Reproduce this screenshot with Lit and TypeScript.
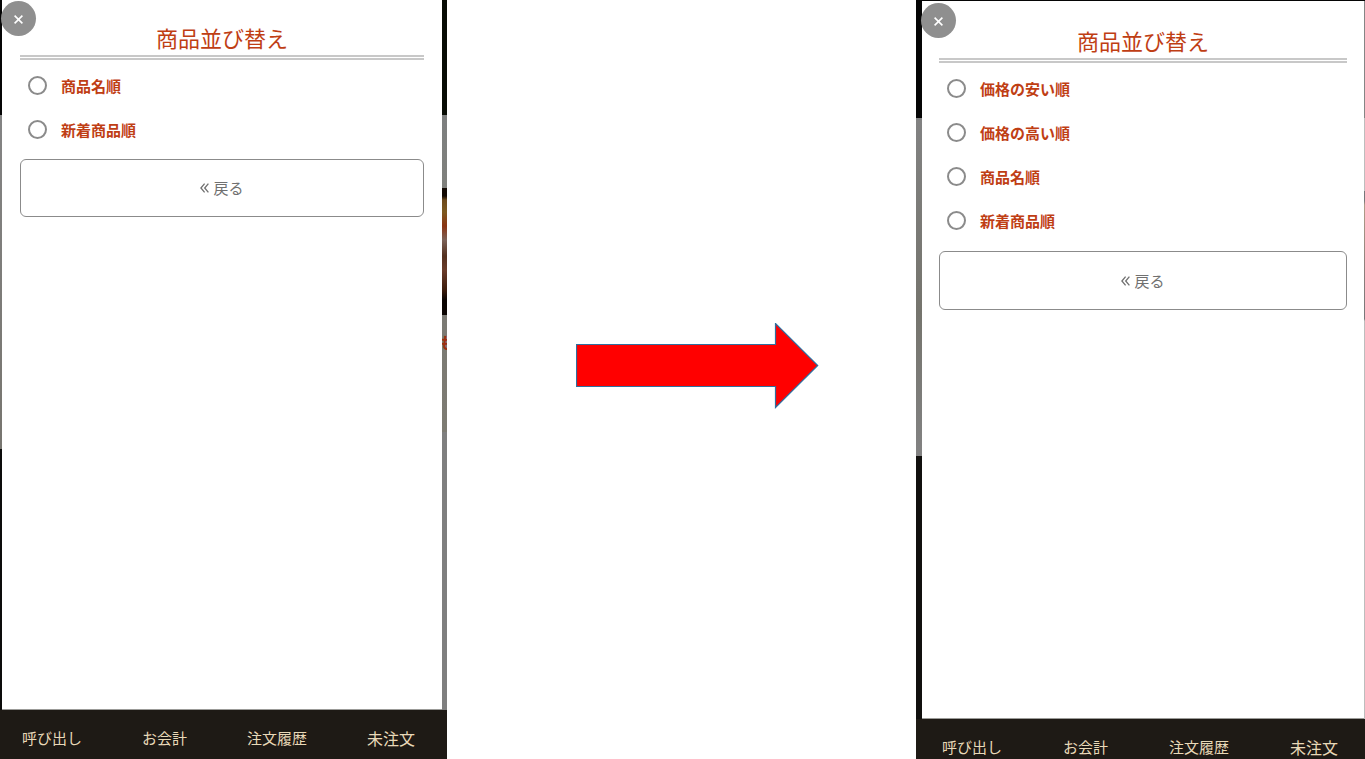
import { LitElement, html, css, svg } from "lit";
import { customElement, property } from "lit/decorators.js";
import { classMap } from "lit/directives/class-map.js";

const FOOTER_ITEMS = ["呼び出し", "お会計", "注文履歴"];
const FOOTER_TOTAL = "未注文";

@customElement("sort-phone")
class SortPhone extends LitElement {
  @property({ type: Array }) options: string[] = [];
  @property({ type: String, reflect: true }) variant = "before";

  static styles = css`
    :host {
      display: flex;
      flex-direction: column;
      min-width: 0;
      min-height: 100vh;
      background: #1e1a15;
      --left: 2px;
      --right: 5px;
      --top: 0px;
      --title-pad: 22px;
      --side-pad: 18px;
      --button-gap: 7px;
      --button-height: 58px;
      --footer-height: 49px;
      --footer-pad: 17px 32px 0 22px;
    }
    :host([variant="after"]) {
      --left: 6px;
      --right: 1px;
      --top: 1px;
      --title-pad: 24px;
      --side-pad: 17px;
      --button-gap: 8px;
      --button-height: 59px;
      --footer-height: 40px;
      --footer-pad: 17px 27px 0 26px;
    }
    .stage {
      flex: 1;
      display: grid;
      grid-template-columns: var(--left) minmax(0, 1fr) var(--right);
      padding-top: var(--top);
      background: #050505;
    }
    .strip {
      overflow: hidden;
      background: linear-gradient(#050505 115px, #848484 115px, #77756f 449px, #0c0c0b 449px);
    }
    .strip.right {
      padding-top: 331px;
      background: linear-gradient(
        #080c05 115px, #7d7f7f 115px, #7f807c 188px,
        #120903 188px, #120903 196px, #6d4a1c 200px, #7d5a20 212px,
        #8a3412 226px, #7c6258 240px, #54301f 256px, #6a3c2a 270px,
        #3c1c0c 290px, #0b0502 300px, #0b0502 315px,
        #7b7a74 315px, #7d7b72 432px, #7f7f7f 432px
      );
    }
    :host([variant="after"]) .strip.left {
      background: linear-gradient(#050505 117px, #828282 117px, #75746d 310px, #828282 455px, #11100e 455px);
    }
    :host([variant="after"]) .strip.right {
      background: linear-gradient(
        #858585 117px, #bdbdbd 117px, #bdbdbd 190px, #77777a 190px, #77777a 200px,
        #b09c88 204px, #8d7f7c 270px, #77777a 318px, #bdbdbd 320px
      );
    }
    .peek {
      display: block;
      color: #9c2f10;
      font-size: 16px;
      line-height: 22px;
      font-weight: 700;
      text-indent: -3px;
    }
    .sheet {
      position: relative;
      box-sizing: border-box;
      padding: var(--title-pad) var(--side-pad) 0;
      background: #fff;
      border-bottom: 1px solid #9b9b98;
    }
    .close {
      position: absolute;
      top: 1px;
      left: -1px;
      width: 35px;
      height: 35px;
      padding: 0;
      border: 0;
      border-radius: 50%;
      background: #8f8f8f;
      display: grid;
      place-items: center;
    }
    :host([variant="after"]) .close {
      top: 2px;
    }
    h1 {
      margin: 0 0 4px;
      padding-bottom: 3px;
      border-bottom: 5px double #c8c8c8;
      color: #bf3e14;
      font-size: 22px;
      font-weight: 400;
      line-height: 30px;
      text-align: center;
    }
    fieldset {
      margin: 0;
      padding: 0;
      border: 0;
      min-width: 0;
    }
    .row {
      display: flex;
      align-items: center;
      gap: 14px;
      height: 44px;
      padding-left: 8px;
      color: #bf3e14;
      font-size: 15px;
      font-weight: 700;
      line-height: 22px;
    }
    .row input {
      appearance: none;
      box-sizing: border-box;
      width: 19px;
      height: 19px;
      margin: 0 0 2px;
      border: 2px solid #8b8b8b;
      border-radius: 50%;
      background: #fff;
    }
    .row input:checked {
      background: radial-gradient(#bf3e14 5px, #fff 6px);
    }
    .back {
      display: flex;
      align-items: center;
      justify-content: center;
      gap: 4px;
      box-sizing: border-box;
      width: 100%;
      height: var(--button-height);
      margin-top: var(--button-gap);
      padding: 0;
      border: 1px solid #8b8b8b;
      border-radius: 6px;
      background: #fff;
      color: #707070;
      font: inherit;
      font-size: 15px;
      line-height: 22px;
    }
    nav {
      box-sizing: border-box;
      height: var(--footer-height);
      padding: var(--footer-pad);
      display: flex;
      align-items: flex-start;
      justify-content: space-between;
    }
    nav button {
      padding: 0;
      border: 0;
      background: none;
      color: #e9d9b8;
      font: inherit;
      font-size: 15px;
      line-height: 22px;
      white-space: nowrap;
    }
    nav .total {
      font-size: 16px;
    }
  `;

  render() {
    const items = [...FOOTER_ITEMS, FOOTER_TOTAL];
    return html`
      <div class="stage">
        <div class="strip left"></div>
        <section class="sheet">
          <h1>商品並び替え</h1>
          <fieldset>
            ${this.options.map(
              (label, i) => html`
                <label class="row" for="sort-${i}">
                  <input type="radio" id="sort-${i}" name="sort" />
                  <span>${label}</span>
                </label>
              `
            )}
          </fieldset>
          <button class="back" type="button">
            <svg width="9" height="10" viewBox="0 0 9 10" fill="none" stroke="#707070" stroke-width="1.3">
              <path d="M4.6 .6 .9 5l3.7 4.4M8.4 .6 4.7 5l3.7 4.4" />
            </svg>
            <span>戻る</span>
          </button>
          <button class="close" type="button">
            <svg width="9" height="11" viewBox="0 0 9 11" fill="none" stroke="#fff" stroke-width="1.6">
              <path d="M.6 2.6l7.8 7.8M8.4 2.6.6 10.4" />
            </svg>
          </button>
        </section>
        <div class="strip right">
          ${this.variant === "before" ? html`<span class="peek">も</span>` : ""}
        </div>
      </div>
      <nav>
        ${items.map(
          (t) => html`<button type="button" class=${classMap({ total: t === FOOTER_TOTAL })}>${t}</button>`
        )}
      </nav>
    `;
  }
}

@customElement("app-root")
class AppRoot extends LitElement {
  static styles = css`
    :host {
      display: block;
      background: #fff;
      font-family: "Noto Sans CJK JP", "Noto Sans", sans-serif;
    }
    main {
      display: grid;
      grid-template-columns: minmax(0, 447fr) minmax(0, 469fr) minmax(0, 449fr);
      min-height: 100vh;
    }
    .between {
      display: flex;
      align-items: center;
      justify-content: center;
      padding: 0 0 28px 31px;
    }
    .arrow {
      display: block;
    }
  `;

  render() {
    return html`
      <main>
        <sort-phone variant="before" .options=${["商品名順", "新着商品順"]}></sort-phone>
        <div class="between">
          <svg class="arrow" width="243" height="86" viewBox="0 0 243 86">
            ${svg`<path d="M.5 21.5H199.5V.5L241.7 42.5 199.5 84.5V63.5H.5Z" fill="#f00" stroke="#2f6f9f" stroke-width="1.2" />`}
          </svg>
        </div>
        <sort-phone
          variant="after"
          .options=${["価格の安い順", "価格の高い順", "商品名順", "新着商品順"]}
        ></sort-phone>
      </main>
    `;
  }
}
